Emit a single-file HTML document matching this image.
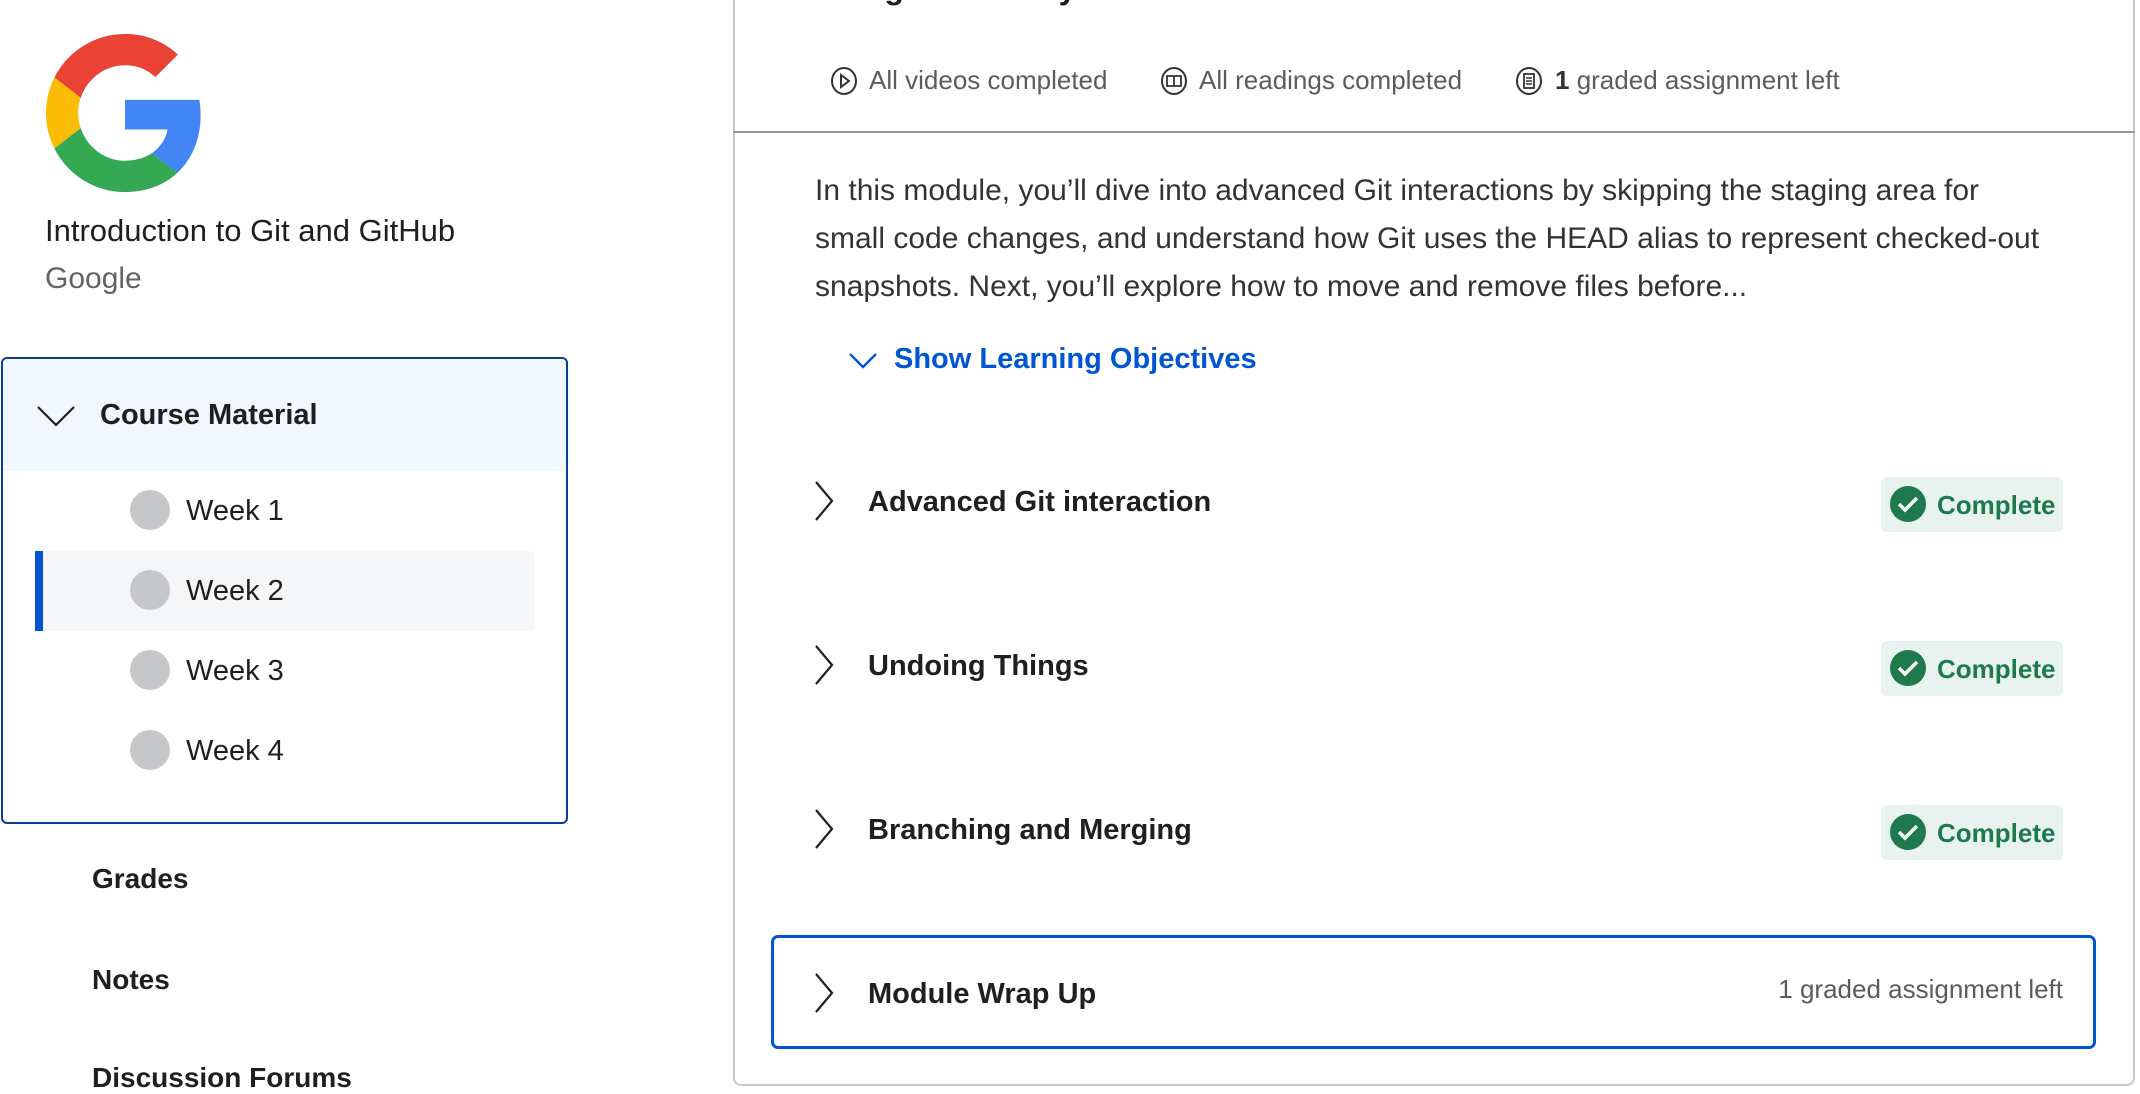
<!DOCTYPE html>
<html><head><meta charset="utf-8"><style>
*{margin:0;padding:0;box-sizing:border-box}
body{width:2140px;height:1086px;overflow:hidden;background:#fff;font-family:"Liberation Sans",sans-serif;color:#1f1f1f;position:relative}
.a{position:absolute;white-space:nowrap}
.b{font-weight:bold}
</style></head><body>
<svg class="a" style="left:46px;top:33px" width="158" height="160" viewBox="0 0 48 48">
<path fill="#EA4335" d="M24 9.5c3.540 0 6.71 1.22 9.21 3.6l6.85-6.85C35.9 2.38 30.47 0 24 0 14.62 0 6.51 5.38 2.56 13.22l7.98 6.19C12.430 13.72 17.74 9.5 24 9.5z"/>
<path fill="#4285F4" d="M46.98 24.55c0-1.57-.15-3.09-.38-4.55H24v9.02h12.94c-.58 2.96-2.26 5.48-4.78 7.18l7.73 6c4.51-4.18 7.09-10.36 7.09-17.65z"/>
<path fill="#FBBC05" d="M10.53 28.59c-.48-1.45-.76-2.99-.76-4.59s.27-3.14.76-4.59l-7.98-6.19C.92 16.46 0 20.12 0 24c0 3.88.92 7.54 2.56 10.78l7.970-6.19z"/>
<path fill="#34A853" d="M24 48c6.48 0 11.93-2.13 15.89-5.81l-7.73-6c-2.15 1.45-4.92 2.3-8.16 2.3-6.26 0-11.57-4.22-13.47-9.91l-7.98 6.19C6.51 42.62 14.62 48 24 48z"/>
</svg>
<div class="a" style="left:45px;top:213px;font-size:31px">Introduction to Git and GitHub</div>
<div class="a" style="left:45px;top:262px;font-size:30px;color:#636363">Google</div>

<div class="a" style="left:1px;top:357px;width:567px;height:467px;border:2px solid #0b3d91;border-radius:6px;overflow:hidden">
 <div style="position:absolute;left:0;top:0;width:100%;height:112px;background:#f2f7fe"></div>
 <svg style="position:absolute;left:33px;top:46px" width="40" height="24" viewBox="0 0 40 24"><path d="M2 2 L20 20 L38 2" fill="none" stroke="#1f1f1f" stroke-width="2.2"/></svg>
 <div class="b" style="position:absolute;left:97px;top:40px;font-size:29px">Course Material</div>
 <div style="position:absolute;left:32px;top:192px;width:500px;height:80px;background:#f5f6f8;border-radius:0 6px 6px 0"></div>
 <div style="position:absolute;left:32px;top:192px;width:8px;height:80px;background:#0056d2"></div>
</div>
<div class="a" style="left:130px;top:490px;width:40px;height:40px;border-radius:50%;background:#c6c7c9"></div>
<div class="a" style="left:130px;top:570px;width:40px;height:40px;border-radius:50%;background:#c6c7c9"></div>
<div class="a" style="left:130px;top:650px;width:40px;height:40px;border-radius:50%;background:#c6c7c9"></div>
<div class="a" style="left:130px;top:730px;width:40px;height:40px;border-radius:50%;background:#c6c7c9"></div>
<div class="a" style="left:186px;top:495px;font-size:29px">Week 1</div>
<div class="a" style="left:186px;top:575px;font-size:29px">Week 2</div>
<div class="a" style="left:186px;top:655px;font-size:29px">Week 3</div>
<div class="a" style="left:186px;top:735px;font-size:29px">Week 4</div>
<div class="a b" style="left:92px;top:863px;font-size:28px">Grades</div>
<div class="a b" style="left:92px;top:964px;font-size:28px">Notes</div>
<div class="a b" style="left:92px;top:1062px;font-size:28px">Discussion Forums</div>

<div class="a" style="left:733px;top:-10px;width:1402px;height:1096px;border:2px solid #c8c8c8;border-radius:0 0 8px 8px"></div>
<div class="a" style="left:733px;top:131px;width:1402px;height:2px;background:#999"></div>
<div class="a b" style="left:815px;top:-30px;font-size:32px">Using Git Locally</div>

<svg class="a" style="left:830px;top:66px" width="28" height="30" viewBox="0 0 28 30"><ellipse cx="14" cy="15" rx="12" ry="13" fill="none" stroke="#333" stroke-width="2"/><path d="M11 9 L19 15 L11 21 Z" fill="none" stroke="#333" stroke-width="2"/></svg>
<div class="a" style="left:869px;top:65px;font-size:26px;color:#5b5b5b">All videos completed</div>
<svg class="a" style="left:1160px;top:66px" width="28" height="30" viewBox="0 0 28 30"><ellipse cx="14" cy="15" rx="12" ry="13" fill="none" stroke="#333" stroke-width="2"/><path d="M7 10 H14 V20 H7 Z M14 10 H21 V20 H14" fill="none" stroke="#333" stroke-width="1.8"/></svg>
<div class="a" style="left:1199px;top:65px;font-size:26px;color:#5b5b5b">All readings completed</div>
<svg class="a" style="left:1515px;top:66px" width="28" height="30" viewBox="0 0 28 30"><ellipse cx="14" cy="15" rx="12" ry="13" fill="none" stroke="#333" stroke-width="2"/><rect x="9" y="8" width="10" height="14" fill="none" stroke="#333" stroke-width="1.8"/><path d="M11 12H17M11 15H17M11 18H17" stroke="#333" stroke-width="1.5"/></svg>
<div class="a" style="left:1555px;top:65px;font-size:26px;color:#5b5b5b"><b style="color:#333">1</b> graded assignment left</div>

<div class="a" style="left:815px;top:167px;font-size:30px;line-height:48px;color:#333">In this module, you’ll dive into advanced Git interactions by skipping the staging area for<br>small code changes, and understand how Git uses the HEAD alias to represent checked-out<br>snapshots. Next, you’ll explore how to move and remove files before...</div>

<svg class="a" style="left:848px;top:352px" width="30" height="18" viewBox="0 0 30 18"><path d="M2 2 L15 15 L28 2" fill="none" stroke="#0056d2" stroke-width="2.4"/></svg>
<div class="a b" style="left:894px;top:343px;font-size:29px;color:#0056d2">Show Learning Objectives</div>

<svg class="a" style="left:812px;top:480px" width="24" height="42" viewBox="0 0 24 42"><path d="M4 2 L20 21 L4 40" fill="none" stroke="#1f1f1f" stroke-width="2.2"/></svg>
<div class="a b" style="left:868px;top:486px;font-size:29px">Advanced Git interaction</div>
<svg class="a" style="left:812px;top:644px" width="24" height="42" viewBox="0 0 24 42"><path d="M4 2 L20 21 L4 40" fill="none" stroke="#1f1f1f" stroke-width="2.2"/></svg>
<div class="a b" style="left:868px;top:650px;font-size:29px">Undoing Things</div>
<svg class="a" style="left:812px;top:808px" width="24" height="42" viewBox="0 0 24 42"><path d="M4 2 L20 21 L4 40" fill="none" stroke="#1f1f1f" stroke-width="2.2"/></svg>
<div class="a b" style="left:868px;top:814px;font-size:29px">Branching and Merging</div>

<div class="a" style="left:1881px;top:477px;width:182px;height:55px;background:#e8f2ee;border-radius:6px"></div>
<div class="a" style="left:1881px;top:641px;width:182px;height:55px;background:#e8f2ee;border-radius:6px"></div>
<div class="a" style="left:1881px;top:805px;width:182px;height:55px;background:#e8f2ee;border-radius:6px"></div>
<svg class="a" style="left:1890px;top:486px" width="36" height="36" viewBox="0 0 36 36"><circle cx="18" cy="18" r="18" fill="#1e7a4d"/><path d="M9 18 L15 24 L27 12" fill="none" stroke="#fff" stroke-width="3.5"/></svg>
<svg class="a" style="left:1890px;top:650px" width="36" height="36" viewBox="0 0 36 36"><circle cx="18" cy="18" r="18" fill="#1e7a4d"/><path d="M9 18 L15 24 L27 12" fill="none" stroke="#fff" stroke-width="3.5"/></svg>
<svg class="a" style="left:1890px;top:814px" width="36" height="36" viewBox="0 0 36 36"><circle cx="18" cy="18" r="18" fill="#1e7a4d"/><path d="M9 18 L15 24 L27 12" fill="none" stroke="#fff" stroke-width="3.5"/></svg>
<div class="a b" style="left:1937px;top:490px;font-size:26px;color:#1e7a4d">Complete</div>
<div class="a b" style="left:1937px;top:654px;font-size:26px;color:#1e7a4d">Complete</div>
<div class="a b" style="left:1937px;top:818px;font-size:26px;color:#1e7a4d">Complete</div>

<div class="a" style="left:771px;top:935px;width:1325px;height:114px;border:3px solid #0056d2;border-radius:7px"></div>
<svg class="a" style="left:812px;top:972px" width="24" height="42" viewBox="0 0 24 42"><path d="M4 2 L20 21 L4 40" fill="none" stroke="#1f1f1f" stroke-width="2.2"/></svg>
<div class="a b" style="left:868px;top:978px;font-size:29px">Module Wrap Up</div>
<div class="a" style="right:77px;top:974px;font-size:26px;color:#5b5b5b">1 graded assignment left</div>
</body></html>
